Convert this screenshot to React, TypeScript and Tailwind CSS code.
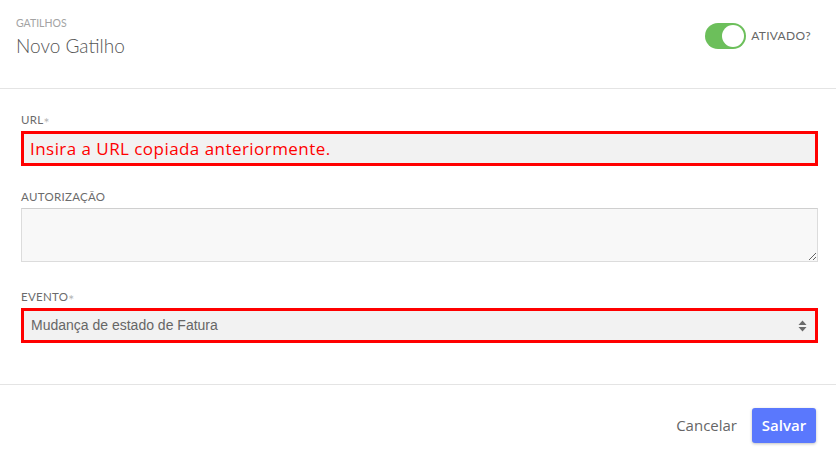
import React, { useState } from "react";

function Toggle({ on, onChange }: { on: boolean; onChange: (v: boolean) => void }) {
  return (
    <button
      type="button"
      onClick={() => onChange(!on)}
      className={`relative h-[26px] w-[41px] rounded-full ${on ? "bg-[#6cbf5b]" : "bg-[#d5d5d5]"}`}
    >
      <span
        className={`absolute top-[2px] h-[22px] w-[22px] rounded-full bg-white ${on ? "left-[17px]" : "left-[2px]"}`}
      />
    </button>
  );
}

function Label({ children, required }: { children: React.ReactNode; required?: boolean }) {
  return (
    <div className="mb-[5px] flex h-[14px] translate-y-[1px] items-center text-[11.5px] uppercase tracking-[0.3px] text-[#6b6b6b] font-['Lato',sans-serif]">
      {children}
      {required && <span className="translate-y-[2px] text-[14px] text-[#b5b5b5]">*</span>}
    </div>
  );
}

export default function App() {
  const [active, setActive] = useState(true);

  return (
    <div className="h-[454px] w-[836px] bg-white font-['Lato',sans-serif]">
      {/* --- HEADER --- */}
      <div className="flex h-[89px] items-start justify-between border-b border-[#e4e4e4] pl-4 pr-[25px]">
        <div className="pt-[17px]">
          <div className="text-[10.5px] leading-[12px] uppercase text-[#a3a3a3]">Gatilhos</div>
          <div className="mt-[6px] text-[19px] font-light leading-[22px] text-[#555]">Novo Gatilho</div>
        </div>
        <div className="flex items-center gap-[5px] pt-[23px]">
          <Toggle on={active} onChange={setActive} />
          <span className="text-[12px] tracking-[0.3px] text-[#666]">ATIVADO?</span>
        </div>
      </div>

      {/* --- FORM --- */}
      <div className="h-[295px] pl-[21px] pr-[18px] pt-[23px]">
        <div>
          <Label required>URL</Label>
          <div className="flex h-[35px] items-center border-[3px] border-[#ff0000] bg-[#f2f2f2] px-[6px]">
            <span className="font-['Open_Sans',sans-serif] text-[17px] tracking-[0.45px] text-[#ff0000]">
              Insira a URL copiada anteriormente.
            </span>
          </div>
        </div>

        <div className="mt-[23px]">
          <Label>Autorização</Label>
          <textarea className="block h-[54px] w-full resize-y border border-[#dcdcdc] border-t-[#cfcfcf] bg-[#f8f8f8] outline-none" />
        </div>

        <div className="mt-[27px]">
          <Label required>Evento</Label>
          <div className="flex h-[35px] items-center justify-between border-[3px] border-[#ff0000] bg-[#f2f2f2] pl-[7px] pr-[8px]">
            <span className="font-['Liberation_Sans',sans-serif] text-[14px] text-[#666]">
              Mudança de estado de Fatura
            </span>
            <svg width="9" height="12" viewBox="0 0 9 12">
              <path d="M4.5 0.5 L8.5 5 H0.5 Z" fill="#6a6a6a" />
              <path d="M4.5 11.5 L8.5 7 H0.5 Z" fill="#6a6a6a" />
            </svg>
          </div>
        </div>
      </div>

      {/* --- FOOTER --- */}
      <div className="flex items-center justify-end gap-[15px] border-t border-[#e4e4e4] pr-[20px] pt-[23px]">
        <button type="button" className="font-['Open_Sans',sans-serif] text-[15px] text-[#666]">
          Cancelar
        </button>
        <button
          type="button"
          className="h-[35px] w-[64px] rounded-[3px] bg-[#5a78fd] font-['Open_Sans',sans-serif] text-[15px] font-semibold text-white shadow-[0_1px_3px_rgba(0,0,0,0.25)]"
        >
          Salvar
        </button>
      </div>
    </div>
  );
}
